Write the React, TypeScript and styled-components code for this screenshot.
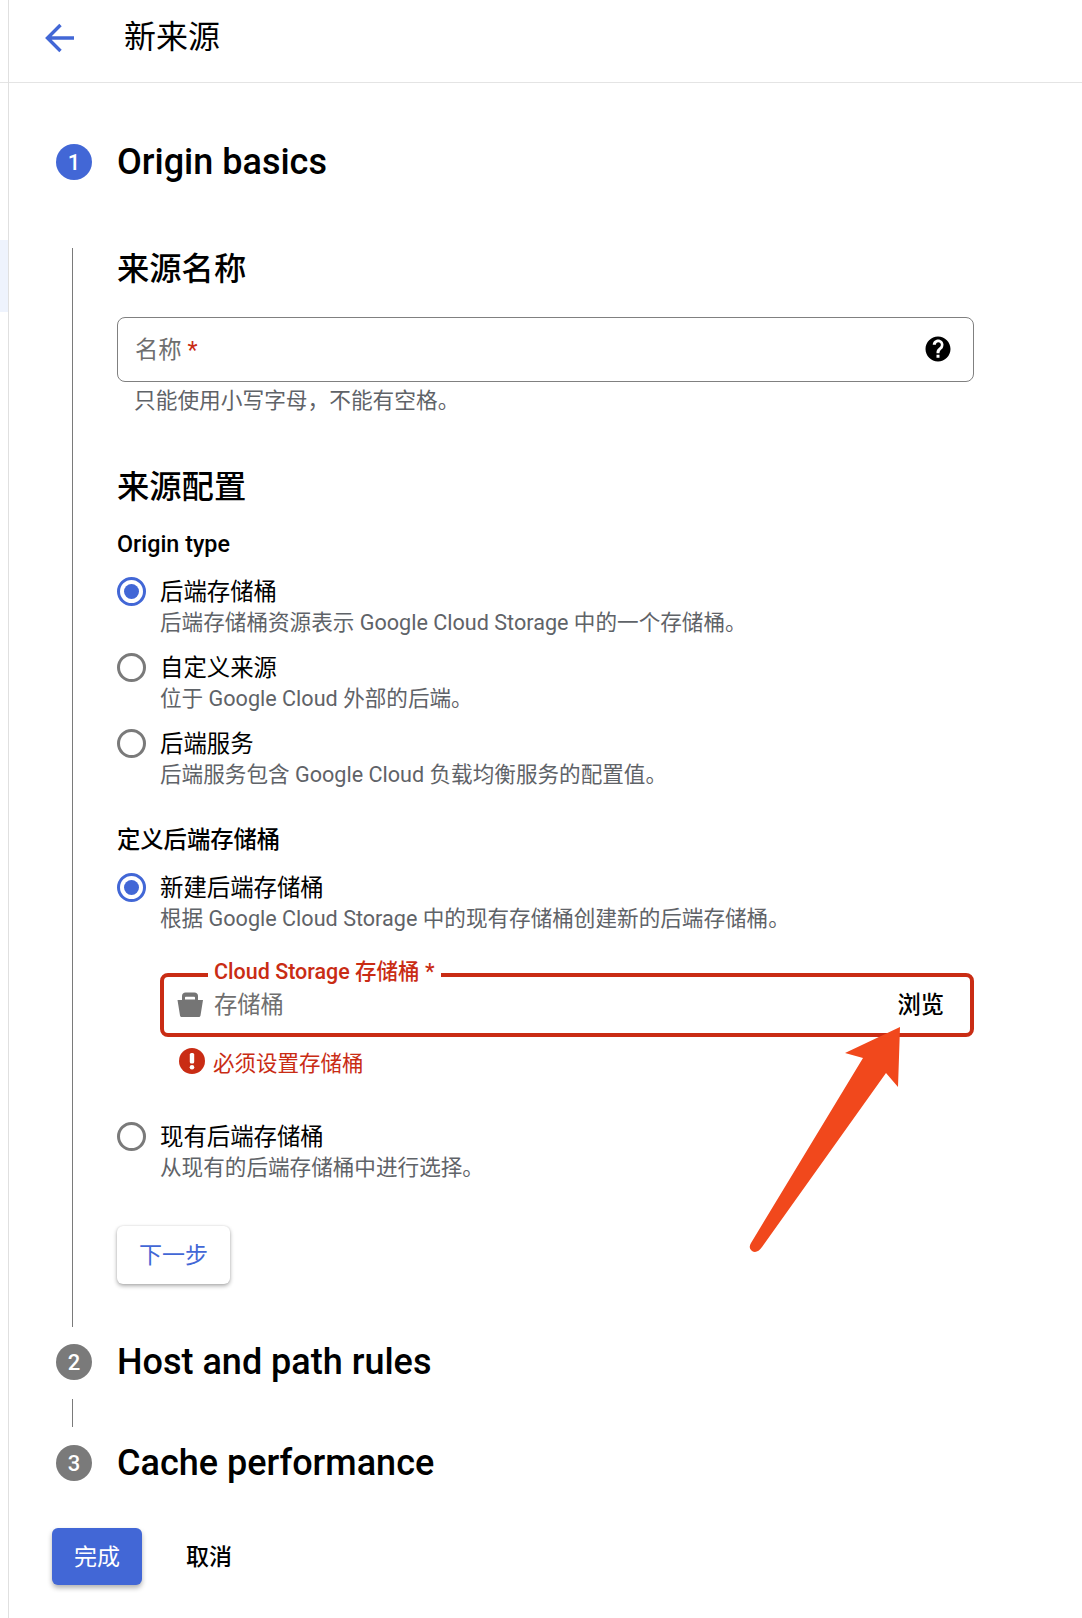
import React from 'react';
import styled, { createGlobalStyle } from 'styled-components';

const GlobalStyle = createGlobalStyle`
  html, body { margin: 0; padding: 0; background: #fff; }
  body { font-family: Roboto, "Noto Sans CJK SC", sans-serif; color: #000; }
  * { box-sizing: border-box; }
`;

const Page = styled.div`
  position: relative;
  display: flex;
  width: 1082px;
  height: 1618px;
  overflow: hidden;
`;

const Rail = styled.div`
  width: 8px;
  flex: none;
`;

const RailTop = styled.div`
  height: 83px;
  border-bottom: 1px solid #e4e4e4;
`;

const RailMark = styled.div`
  margin-top: 157px;
  height: 72px;
  background: #eef3fd;
`;

const Main = styled.main`
  flex: 1;
  border-left: 1px solid #e0e0e0;
`;

const Header = styled.header`
  display: flex;
  align-items: center;
  height: 83px;
  padding-left: 36px;
  border-bottom: 1px solid #e4e4e4;
`;

const BackIcon = styled.svg`
  width: 30px;
  height: 30px;
  margin-top: -6px;
  flex: none;
`;

const PageTitle = styled.h1`
  margin: -9px 0 0 49px;
  font-size: 32px;
  line-height: 40px;
  font-weight: 400;
`;

const StepHead = styled.div<{ $top: number }>`
  display: flex;
  align-items: center;
  height: 36px;
  margin: ${p => p.$top}px 0 0 47px;
`;

const StepNumber = styled.span<{ $active?: boolean }>`
  display: flex;
  align-items: center;
  justify-content: center;
  width: 36px;
  height: 36px;
  border-radius: 50%;
  background: ${p => (p.$active ? '#4267d6' : '#7a7a7a')};
  color: #fff;
  font-size: 22px;
  font-weight: 500;
`;

const StepTitle = styled.h2`
  margin: 0 0 0 25px;
  font-size: 36px;
  line-height: 44px;
  font-weight: 500;
  white-space: nowrap;
`;

const StepBody = styled.section`
  margin: 68px 0 0 63px;
  padding: 1px 0 43px 44px;
  border-left: 1px solid #7a7a7a;
`;

const Connector = styled.div`
  width: 1px;
  height: 28px;
  margin: 19px 0 0 63px;
  background: #7a7a7a;
`;

const SectionTitle = styled.h3<{ $top?: number }>`
  margin: ${p => p.$top ?? 0}px 0 0;
  font-size: 32.3px;
  line-height: 40px;
  font-weight: 500;
`;

const NameInput = styled.div`
  display: flex;
  align-items: center;
  justify-content: space-between;
  width: 857px;
  height: 65px;
  margin-top: 28px;
  padding: 0 20px 0 17px;
  border: 1px solid #808080;
  border-radius: 8px;
`;

const HelpIcon = styled.svg`
  width: 30px;
  height: 30px;
  margin-top: -2px;
  flex: none;
`;

const Placeholder = styled.span`
  font-size: 23.3px;
  line-height: 30px;
  color: #6f6f6f;
`;

const Required = styled.span`
  color: #c92c14;
`;

const Helper = styled.div`
  margin: 5px 0 0 17px;
  font-size: 21.7px;
  line-height: 28px;
  color: #5f6368;
`;

const GroupLabel = styled.div<{ $top: number }>`
  margin-top: ${p => p.$top}px;
  font-size: 23.3px;
  line-height: 30px;
  font-weight: 500;
`;

const RadioRow = styled.div<{ $top: number }>`
  display: grid;
  grid-template-columns: 29px 1fr;
  column-gap: 14px;
  margin-top: ${p => p.$top}px;
`;

const RadioCircle = styled.span<{ $checked?: boolean }>`
  display: flex;
  align-items: center;
  justify-content: center;
  width: 29px;
  height: 29px;
  margin-top: 1px;
  border-radius: 50%;
  border: 3.5px solid ${p => (p.$checked ? '#4267d6' : '#7a7a7a')};

  &::after {
    content: '';
    display: ${p => (p.$checked ? 'block' : 'none')};
    width: 15px;
    height: 15px;
    border-radius: 50%;
    background: #4267d6;
  }
`;

const RadioLabel = styled.div`
  font-size: 23.4px;
  line-height: 32px;
`;

const RadioHint = styled.div`
  grid-column: 2;
  margin-top: 1px;
  font-size: 21.6px;
  line-height: 28px;
  color: #5f6368;
  white-space: nowrap;
`;

const BucketField = styled.div`
  position: relative;
  display: flex;
  align-items: center;
  width: 814px;
  height: 64px;
  margin: 40px 0 0 43px;
  padding: 0 26px 0 13px;
  border: 4px solid #c92c14;
  border-radius: 8px;
`;

const FieldLabel = styled.span`
  position: absolute;
  left: 44px;
  top: -19px;
  padding: 0 6px 0 6px;
  background: #fff;
  font-size: 21.5px;
  line-height: 28px;
  font-weight: 500;
  color: #c92c14;
  white-space: nowrap;
`;

const BucketIcon = styled.svg`
  width: 26px;
  height: 26px;
  flex: none;
`;

const BucketText = styled(Placeholder)`
  margin-left: 11px;
  flex: 1;
`;

const Browse = styled.span`
  font-size: 23.3px;
  line-height: 32px;
  font-weight: 500;
`;

const ErrorRow = styled.div`
  display: flex;
  align-items: center;
  height: 30px;
  margin: 9px 0 0 62px;
  color: #c92c14;
  font-size: 21.5px;
`;

const ErrorIcon = styled.svg`
  width: 26px;
  height: 26px;
  margin-right: 8px;
  flex: none;
`;

const NextButton = styled.button`
  display: block;
  width: 113px;
  height: 58px;
  margin-top: 44px;
  padding: 0 0 5px;
  border: none;
  border-radius: 6px;
  background: #fff;
  color: #4267d6;
  font: inherit;
  font-size: 23px;
  box-shadow: 0 2px 4px rgba(0, 0, 0, 0.32), 0 0 2px rgba(0, 0, 0, 0.12);
`;

const Footer = styled.div`
  display: flex;
  align-items: center;
  margin: 47px 0 0 43px;
`;

const DoneButton = styled.button`
  width: 90px;
  height: 57px;
  padding: 0 0 3px;
  border: none;
  border-radius: 6px;
  background: #4267d6;
  color: #fff;
  font: inherit;
  font-size: 23px;
  box-shadow: 0 3px 5px rgba(0, 0, 0, 0.3);
`;

const CancelButton = styled.button`
  margin-left: 44px;
  padding: 0 0 3px;
  border: none;
  background: none;
  color: #000;
  font: inherit;
  font-size: 23px;
  font-weight: 500;
`;

const ArrowMark = styled.svg`
  position: absolute;
  left: 740px;
  top: 1020px;
  width: 170px;
  height: 240px;
`;

export default function App() {
  return (
    <Page>
      <GlobalStyle />
      <Rail>
        <RailTop />
        <RailMark />
      </Rail>
      <Main>
        <Header>
          <BackIcon viewBox="0 0 30 30" fill="none" stroke="#4267d6" strokeWidth="3.4">
            <path d="M29 15H3M15.5 2L2.5 15l13 13" />
          </BackIcon>
          <PageTitle>新来源</PageTitle>
        </Header>

        <StepHead $top={61}>
          <StepNumber $active>1</StepNumber>
          <StepTitle>Origin basics</StepTitle>
        </StepHead>
        <StepBody>
          <SectionTitle>来源名称</SectionTitle>
          <NameInput>
            <Placeholder>名称 <Required>*</Required></Placeholder>
            <HelpIcon viewBox="0 0 24 24">
              <path d="M12 2C6.48 2 2 6.48 2 12s4.48 10 10 10 10-4.48 10-10S17.52 2 12 2zm1.2 17h-2.4v-2.4h2.4V19zm2.5-7.7l-1.1 1.1c-.9.9-1.4 1.6-1.4 3h-2.4v-.6c0-1.3.5-2.3 1.4-3.2l1.5-1.5c.4-.4.6-.9.6-1.5 0-1.1-.9-2-2-2s-2 .9-2 2H7.8c0-2.4 1.9-4.3 4.3-4.3s4.3 1.9 4.3 4.3c0 1-.4 1.9-.7 2.7z" fill="#000" />
            </HelpIcon>
          </NameInput>
          <Helper>只能使用小写字母，不能有空格。</Helper>

          <SectionTitle $top={52}>来源配置</SectionTitle>
          <GroupLabel $top={22}>Origin type</GroupLabel>
          <RadioRow $top={17}>
            <RadioCircle $checked />
            <RadioLabel>后端存储桶</RadioLabel>
            <RadioHint>后端存储桶资源表示 Google Cloud Storage 中的一个存储桶。</RadioHint>
          </RadioRow>
          <RadioRow $top={15}>
            <RadioCircle />
            <RadioLabel>自定义来源</RadioLabel>
            <RadioHint>位于 Google Cloud 外部的后端。</RadioHint>
          </RadioRow>
          <RadioRow $top={15}>
            <RadioCircle />
            <RadioLabel>后端服务</RadioLabel>
            <RadioHint>后端服务包含 Google Cloud 负载均衡服务的配置值。</RadioHint>
          </RadioRow>

          <GroupLabel $top={36}>定义后端存储桶</GroupLabel>
          <RadioRow $top={17}>
            <RadioCircle $checked />
            <RadioLabel>新建后端存储桶</RadioLabel>
            <RadioHint>根据 Google Cloud Storage 中的现有存储桶创建新的后端存储桶。</RadioHint>
          </RadioRow>
          <BucketField>
            <FieldLabel>Cloud Storage 存储桶 *</FieldLabel>
            <BucketIcon viewBox="0 0 26 26">
              <path
                fillRule="evenodd"
                d="M5 8V4c0-2 1.500-3.500 3.500-3.500h9c2 0 3.500 1.500 3.500 3.500V8h5l-2.500 15.500c-.1.800-.8 1.500-1.600 1.500H4.600c-.8 0-1.500-.7-1.600-1.500L.5 8H5zm3-.5h10V5.500c0-.5-.3-.8-.8-.8H8.800c-.5 0-.8.3-.8.8v2z"
                fill="#757575"
              />
            </BucketIcon>
            <BucketText>存储桶</BucketText>
            <Browse>浏览</Browse>
          </BucketField>
          <ErrorRow>
            <ErrorIcon viewBox="0 0 26 26">
              <circle cx="13" cy="13" r="13" fill="#c92c14" />
              <rect x="10.800" y="5" width="4.400" height="10.500" rx="1.600" fill="#fff" />
              <circle cx="13" cy="19.300" r="2.300" fill="#fff" />
            </ErrorIcon>
            必须设置存储桶
          </ErrorRow>
          <RadioRow $top={45}>
            <RadioCircle />
            <RadioLabel>现有后端存储桶</RadioLabel>
            <RadioHint>从现有的后端存储桶中进行选择。</RadioHint>
          </RadioRow>
          <NextButton>下一步</NextButton>
        </StepBody>

        <StepHead $top={17}>
          <StepNumber>2</StepNumber>
          <StepTitle>Host and path rules</StepTitle>
        </StepHead>
        <Connector />
        <StepHead $top={18}>
          <StepNumber>3</StepNumber>
          <StepTitle>Cache performance</StepTitle>
        </StepHead>

        <Footer>
          <DoneButton>完成</DoneButton>
          <CancelButton>取消</CancelButton>
        </Footer>
      </Main>
      <ArrowMark viewBox="740 1020 170 240">
        <path
          d="M900 1027L845 1053L863 1058L751 1243Q748 1248 752 1251Q757 1254 762 1247L886 1073L898 1087Z"
          fill="#f1481c"
        />
      </ArrowMark>
    </Page>
  );
}
